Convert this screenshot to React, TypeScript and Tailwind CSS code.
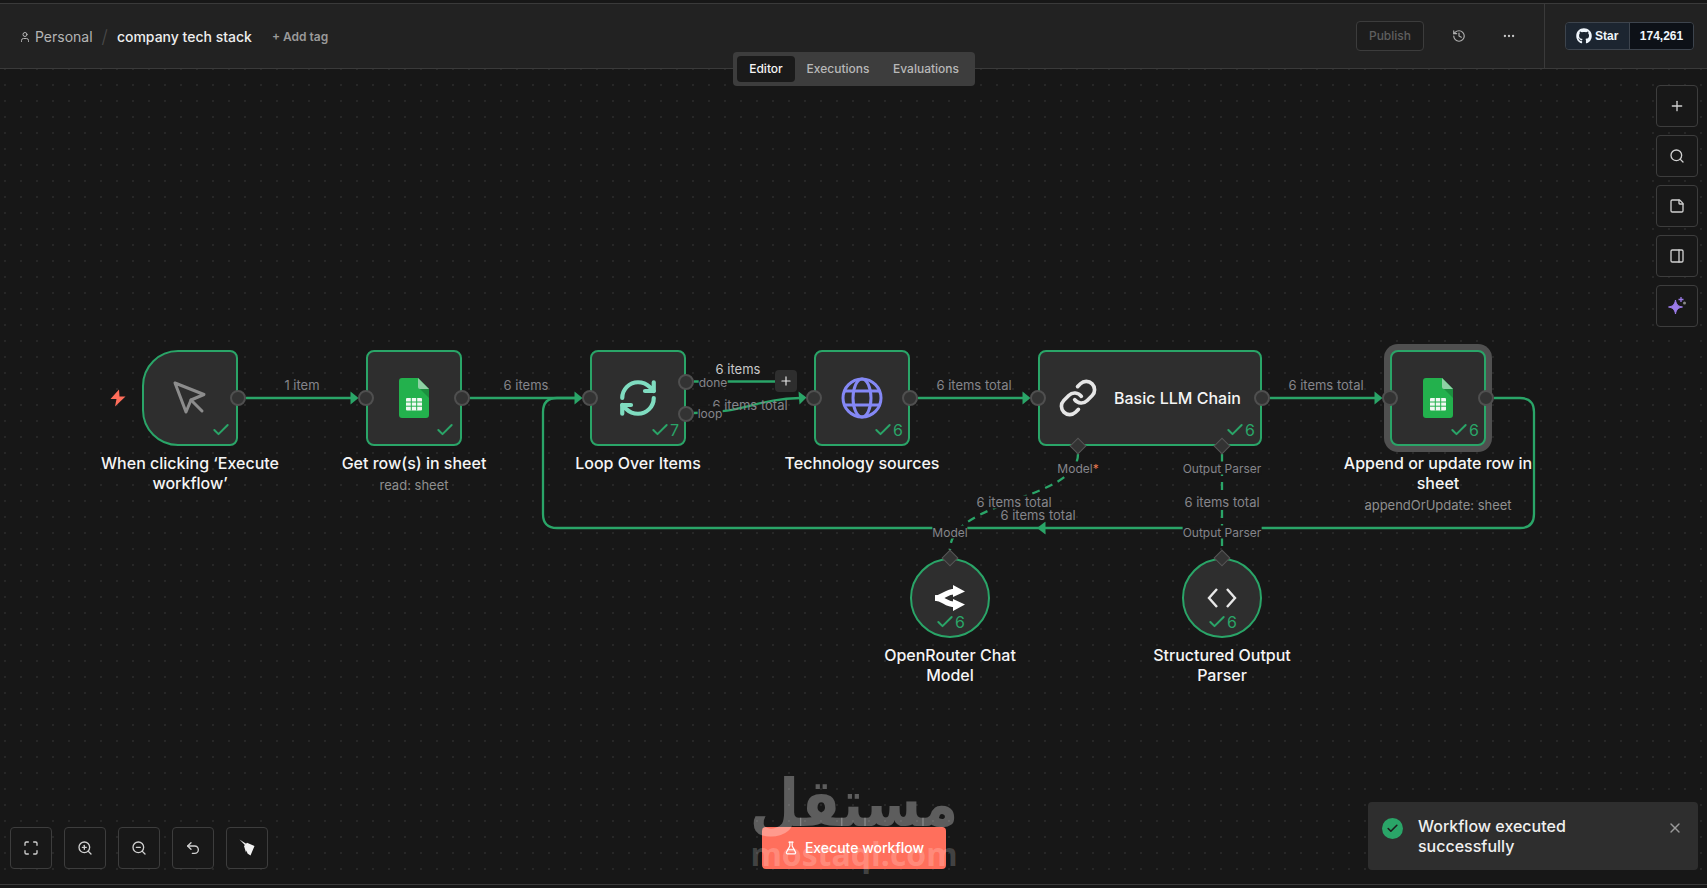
import type { ReactNode } from "react";
import {
  Check,
  Ellipsis,
  FlaskConical,
  History,
  Link,
  Maximize,
  PanelRight,
  Plus,
  RefreshCw,
  Search,
  StickyNote,
  Undo2,
  User,
  X,
  ZoomIn,
  ZoomOut,
} from "lucide-react";
import { FaGithub } from "react-icons/fa";

const GREEN = "#2aa568";

function Status({ count, center }: { count?: number; center?: boolean }) {
  return (
    <div
      className={
        center
          ? "absolute bottom-[4px] left-0 right-0 flex h-5 items-center justify-center text-base leading-none text-[#2aa568]"
          : "absolute bottom-[4px] right-[5px] flex h-5 items-center text-base leading-none text-[#2aa568]"
      }
    >
      <Check size={20} strokeWidth={2.4} />
      {count !== undefined && <span>{count}</span>}
    </div>
  );
}

function Port({ className }: { className: string }) {
  return (
    <div
      className={`absolute h-4 w-4 -translate-x-1/2 -translate-y-1/2 rounded-full border-2 border-[#4f4f4f] bg-[#333333] ${className}`}
    />
  );
}

function Diamond({ className }: { className: string }) {
  return (
    <div
      className={`absolute h-3 w-3 -translate-x-1/2 -translate-y-1/2 rotate-45 border border-[#555555] bg-[#333333] ${className}`}
    />
  );
}

function Caption({
  title,
  sub,
  narrow,
  className,
}: {
  title: string;
  sub?: string;
  narrow?: boolean;
  className: string;
}) {
  return (
    <div
      className={`absolute -translate-x-1/2 text-center ${narrow ? "w-[160px]" : "w-[192px]"} ${className}`}
    >
      <div className="text-base font-medium leading-5 text-[#f5f5f5]">{title}</div>
      {sub && <div className="mt-1 text-[13px] leading-4 text-[#8f8f8f]">{sub}</div>}
    </div>
  );
}

function EdgeLabel({
  children,
  className,
}: {
  children: ReactNode;
  className: string;
}) {
  return (
    <div
      className={`absolute -translate-x-1/2 -translate-y-1/2 whitespace-nowrap leading-[13px] ${className}`}
    >
      {children}
    </div>
  );
}

function SheetIcon() {
  return (
    <svg width="30" height="40" viewBox="0 0 30 40">
      <path d="M3 0H19L30 11V37a3 3 0 0 1-3 3H3a3 3 0 0 1-3-3V3a3 3 0 0 1 3-3Z" fill="#23b14d" />
      <path d="M19 0L30 11H21a2 2 0 0 1-2-2Z" fill="#8ed1a4" />
      <path d="M21 11L30 20V11Z" fill="#1c8f3f" />
      <rect x="7" y="20" width="16" height="12.5" rx="1" fill="#f1f8f3" />
      <path d="M7 24H23M7 28.200H23M12.300 20V32.500M17.700 20V32.500" stroke="#23b14d" strokeWidth="1" />
    </svg>
  );
}

function GlobeIcon() {
  return (
    <svg width="42" height="42" viewBox="0 0 42 42" fill="none" stroke="#8488f5" strokeWidth="3">
      <circle cx="21" cy="21" r="19" />
      <ellipse cx="21" cy="21" rx="9" ry="19" />
      <path d="M3.500 14H38.500M3.500 28H38.500" />
    </svg>
  );
}

function CursorIcon() {
  return (
    <svg width="36" height="36" viewBox="0 0 36 36" fill="none" stroke="#8c8c8c" strokeWidth="3" strokeLinejoin="round" strokeLinecap="round">
      <path d="M3 3L32 14.500L19 20L14 32Z" />
      <path d="M19 20L30 31" />
    </svg>
  );
}

function OpenRouterIcon() {
  return (
    <svg width="32" height="26" viewBox="0 0 32 26" fill="none">
      <path d="M1 13C10 13 11 6.500 21 6.500" stroke="#fff" strokeWidth="5.500" />
      <path d="M1 13C10 13 11 19.500 21 19.500" stroke="#fff" strokeWidth="5.500" />
      <path d="M19 0L31 6.500L19 12Z M19 14L31 19.500L19 26Z" fill="#fff" />
    </svg>
  );
}

function CodeIcon() {
  return (
    <svg width="30" height="24" viewBox="0 0 30 24" fill="none" stroke="#e8e8e8" strokeWidth="2.400">
      <path d="M10 3L2 12L10 21M20 3L28 12L20 21" />
    </svg>
  );
}

function SparkIcon() {
  return (
    <svg width="20" height="20" viewBox="0 0 20 20">
      <path d="M8.500 4C9.300 8.500 11 10.300 15.500 11C11 11.900 9.300 13.500 8.500 18C7.700 13.500 6 11.900 1.500 11C6 10.300 7.700 8.500 8.500 4Z" fill="#9b7be8" stroke="#9b7be8" strokeLinejoin="round" />
      <path d="M14 1V6M11.500 3.500H16.500" stroke="#9b7be8" strokeWidth="1.300" />
      <circle cx="17.500" cy="7" r="1.500" fill="#8a8a8a" />
    </svg>
  );
}

function BroomIcon() {
  return (
    <svg width="18" height="18" viewBox="0 0 18 18" fill="#f2f2f2">
      <path d="M1.500 0.500L8.500 5L7.300 6.500Z" />
      <path d="M6 7L9 3.800L16.500 7L12.500 16.500L9.500 14.500L8.500 11.500L8 13.500Z" />
    </svg>
  );
}

function ToolButton({ children }: { children: ReactNode }) {
  return (
    <button
      type="button"
      className="flex h-[42px] w-[42px] items-center justify-center rounded border border-[#3d3d3d] bg-[#181818] text-[#d0d0d0]"
    >
      {children}
    </button>
  );
}

function Arrow({ points }: { points: string }) {
  return <polygon points={points} fill={GREEN} />;
}

function Edges() {
  return (
    <svg className="absolute left-0 top-0" width="1707" height="888" fill="none" stroke={GREEN} strokeWidth="2.300">
      <path d="M246 398H352" />
      <path d="M470 398H576" />
      <path d="M1494 398H1520Q1534 398 1534 412V514Q1534 528 1520 528H557Q543 528 543 514V412Q543 398 557 398H576" />
      <path d="M694 381.500H776" />
      <path d="M694 413C744 413 756 399 800 398" />
      <path d="M918 398H1024" />
      <path d="M1270 398H1376" />
      <path d="M1078 454C1078 500 950 500 950 550" strokeDasharray="8 6" />
      <path d="M1222 454V550" strokeDasharray="8 6" />
      <g stroke="none">
        <Arrow points="350.500,391.500 358.500,398 350.500,404.500" />
        <Arrow points="574.500,391.500 582.500,398 574.500,404.500" />
        <Arrow points="798.500,391.500 806.500,397.500 799.500,404.500" />
        <Arrow points="1022.500,391.500 1030.500,398 1022.500,404.500" />
        <Arrow points="1374.500,391.500 1382.500,398 1374.500,404.500" />
        <Arrow points="1045.500,521.500 1037,528 1045.500,534.500" />
      </g>
    </svg>
  );
}

function Diagram() {
  const nodeBase =
    "absolute flex h-24 items-center justify-center border-2 border-[#2aa568] bg-[#2e2e2e]";
  const muted = "text-[13px] text-[#85858b]";
  const cut = "bg-[#171717] text-xs text-[#85858b]";
  const cutBig = "bg-[#171717] text-[13px] text-[#85858b]";

  return (
    <div className="absolute left-0 top-[-69px] h-[888px] w-[1707px]">
      <Edges />

      {/* labels on the edges */}
      <EdgeLabel className={`left-[302px] top-[385px] ${muted}`}>1 item</EdgeLabel>
      <EdgeLabel className={`left-[526px] top-[385px] ${muted}`}>6 items</EdgeLabel>
      <EdgeLabel className="left-[738px] top-[369px] text-[13px] text-[#c9c9c9]">6 items</EdgeLabel>
      <EdgeLabel className={`left-[750px] top-[405px] ${muted}`}>6 items total</EdgeLabel>
      <EdgeLabel className={`left-[974px] top-[385px] ${muted}`}>6 items total</EdgeLabel>
      <EdgeLabel className={`left-[1326px] top-[385px] ${muted}`}>6 items total</EdgeLabel>
      <EdgeLabel className={`left-[713px] top-[382px] ${cut}`}>done</EdgeLabel>
      <EdgeLabel className={`left-[710px] top-[413px] ${cut}`}>loop</EdgeLabel>
      <EdgeLabel className={`left-[1078px] top-[468px] ${cut}`}>
        Model<span className="text-[#e8784f]">*</span>
      </EdgeLabel>
      <EdgeLabel className={`left-[1222px] top-[468px] ${cut}`}>Output Parser</EdgeLabel>
      <EdgeLabel className={`left-[1014px] top-[502px] ${cutBig}`}>6 items total</EdgeLabel>
      <EdgeLabel className={`left-[1038px] top-[515px] ${cutBig}`}>6 items total</EdgeLabel>
      <EdgeLabel className={`left-[1222px] top-[502px] ${cutBig}`}>6 items total</EdgeLabel>
      <EdgeLabel className={`left-[950px] top-[532px] ${cut}`}>Model</EdgeLabel>
      <EdgeLabel className={`left-[1222px] top-[532px] ${cut}`}>Output Parser</EdgeLabel>

      <button
        type="button"
        className="absolute left-[775px] top-[370px] flex h-[22px] w-[22px] items-center justify-center rounded bg-[#2e2e2e] text-[#e8e8e8]"
      >
        <Plus size={14} />
      </button>

      {/* trigger */}
      <svg className="absolute left-[109px] top-[389px]" width="18" height="18" viewBox="0 0 18 18">
        <path d="M10 0.500L1.500 10H7.500L6 17.500L16.500 7.500H10.500Z" fill="#ff6d5a" />
      </svg>
      <div className={`${nodeBase} left-[142px] top-[350px] w-24 rounded-l-[36px] rounded-r-lg`}>
        <CursorIcon />
        <Status />
      </div>
      <Caption title="When clicking ‘Execute workflow’" className="left-[190px] top-[453px]" />

      {/* get rows */}
      <div className={`${nodeBase} left-[366px] top-[350px] w-24 rounded-lg`}>
        <SheetIcon />
        <Status />
      </div>
      <Caption title="Get row(s) in sheet" sub="read: sheet" className="left-[414px] top-[453px]" />

      {/* loop */}
      <div className={`${nodeBase} left-[590px] top-[350px] w-24 rounded-lg`}>
        <RefreshCw size={42} color="#7fdcc0" strokeWidth={2.4} />
        <Status count={7} />
      </div>
      <Caption title="Loop Over Items" className="left-[638px] top-[453px]" />

      {/* http request */}
      <div className={`${nodeBase} left-[814px] top-[350px] w-24 rounded-lg`}>
        <GlobeIcon />
        <Status count={6} />
      </div>
      <Caption title="Technology sources" className="left-[862px] top-[453px]" />

      {/* llm chain */}
      <div className={`${nodeBase} left-[1038px] top-[350px] w-[224px] justify-start rounded-lg pl-[18px]`}>
        <Link size={40} color="#e6e6e6" strokeWidth={2.2} />
        <span className="ml-[16px] text-base font-medium text-[#f5f5f5]">Basic LLM Chain</span>
        <Status count={6} />
      </div>

      {/* append */}
      <div className={`${nodeBase} left-[1390px] top-[350px] w-24 rounded-lg ring-[6px] ring-[#505050]`}>
        <SheetIcon />
        <Status count={6} />
      </div>
      <Caption
        title="Append or update row in sheet"
        sub="appendOrUpdate: sheet"
        className="left-[1438px] top-[453px]"
      />

      {/* sub nodes */}
      <div className={`${nodeBase} left-[910px] top-[558px] !h-20 w-20 rounded-full`}>
        <OpenRouterIcon />
        <Status count={6} center />
      </div>
      <Caption narrow title="OpenRouter Chat Model" className="left-[950px] top-[645px]" />

      <div className={`${nodeBase} left-[1182px] top-[558px] !h-20 w-20 rounded-full`}>
        <CodeIcon />
        <Status count={6} center />
      </div>
      <Caption narrow title="Structured Output Parser" className="left-[1222px] top-[645px]" />

      {/* connection handles */}
      <Port className="left-[238px] top-[398px]" />
      <Port className="left-[366px] top-[398px]" />
      <Port className="left-[462px] top-[398px]" />
      <Port className="left-[590px] top-[398px]" />
      <Port className="left-[686px] top-[382px]" />
      <Port className="left-[686px] top-[414px]" />
      <Port className="left-[814px] top-[398px]" />
      <Port className="left-[910px] top-[398px]" />
      <Port className="left-[1038px] top-[398px]" />
      <Port className="left-[1262px] top-[398px]" />
      <Port className="left-[1390px] top-[398px]" />
      <Port className="left-[1486px] top-[398px]" />
      <Diamond className="left-[1078px] top-[446px]" />
      <Diamond className="left-[1222px] top-[446px]" />
      <Diamond className="left-[950px] top-[558px]" />
      <Diamond className="left-[1222px] top-[558px]" />
    </div>
  );
}

export default function App() {
  return (
    <div className="relative flex h-screen w-full flex-col overflow-hidden bg-[#171717] pt-[3px] font-[Inter,sans-serif]">
      <header className="flex h-[66px] shrink-0 items-center border-y border-[#3a3a3a] bg-[#222222] pl-[19px]">
        <div className="flex items-center pt-[1px]">
          <User size={12} className="text-[#b5b5b5]" />
          <span className="ml-[4px] text-sm text-[#b5b5b5]">Personal</span>
          <span className="ml-[9px] text-lg font-light text-[#4a4a4a]">/</span>
          <span className="ml-[9px] text-sm font-medium text-[#eeeeee]">company tech stack</span>
          <span className="ml-[20px] text-xs font-semibold text-[#9a9a9a]">+ Add tag</span>
        </div>

        <div className="ml-auto flex h-full items-center">
          <button
            type="button"
            className="h-[30px] w-[68px] rounded border border-[#3c3c3c] bg-[#1d1d1d] text-xs font-medium text-[#5f5f5f]"
          >
            Publish
          </button>
          <History size={14} className="ml-[28px] text-[#b0b0b0]" />
          <Ellipsis size={14} className="ml-[36px] text-[#c8c8c8]" />
          <div className="ml-[28px] h-full w-px bg-[#3a3a3a]" />
          <div className="ml-[20px] mr-[13px] flex h-[28px] w-[129px] overflow-hidden rounded border border-[#3d444d] font-['Liberation_Sans',sans-serif] text-xs font-bold text-[#f0f6fc]">
            <div className="flex w-[64px] items-center gap-[3px] border-r border-[#3d444d] bg-[#1c2530] pl-[10px]">
              <FaGithub size={16} />
              <span>Star</span>
            </div>
            <div className="flex flex-1 items-center justify-center bg-[#0d1117]">174,261</div>
          </div>
        </div>
      </header>

      <main className="relative flex-1 bg-[#171717] bg-[radial-gradient(#3a3a3a_0.6px,transparent_0.8px)] bg-[size:16px_16px] bg-[position:-3px_-8px]">
        <Diagram />

        {/* right tools */}
        <div className="absolute right-[9px] top-[16px] flex flex-col gap-2">
          <ToolButton>
            <Plus size={16} />
          </ToolButton>
          <ToolButton>
            <Search size={16} />
          </ToolButton>
          <ToolButton>
            <StickyNote size={16} />
          </ToolButton>
          <ToolButton>
            <PanelRight size={16} />
          </ToolButton>
          <ToolButton>
            <SparkIcon />
          </ToolButton>
        </div>

        {/* canvas controls */}
        <div className="absolute bottom-[15px] left-[10px] flex gap-3">
          <ToolButton>
            <Maximize size={16} />
          </ToolButton>
          <ToolButton>
            <ZoomIn size={16} />
          </ToolButton>
          <ToolButton>
            <ZoomOut size={16} />
          </ToolButton>
          <ToolButton>
            <Undo2 size={16} />
          </ToolButton>
          <ToolButton>
            <BroomIcon />
          </ToolButton>
        </div>

        {/* execute */}
        <button
          type="button"
          className="absolute bottom-[15px] left-[762px] flex h-[42px] w-[184px] items-center justify-center gap-[7px] rounded bg-[#ff6f5c] text-sm font-medium text-white"
        >
          <FlaskConical size={14} />
          Execute workflow
        </button>

        {/* toast */}
        <div className="absolute bottom-[14px] right-[9px] flex h-[68px] w-[330px] rounded bg-[#2e2e2e] pl-[14px] pt-[14px]">
          <div className="mt-[2px] flex h-[21px] w-[21px] items-center justify-center rounded-full bg-[#2aa568] text-[#1d1d1d]">
            <Check size={13} strokeWidth={3} />
          </div>
          <div className="ml-[15px] w-[200px] text-base font-medium leading-5 text-[#f0f0f0]">
            Workflow executed successfully
          </div>
          <X size={16} className="ml-[49px] mt-[4px] text-[#9a9a9a]" />
        </div>

        {/* watermark */}
        <div className="pointer-events-none absolute left-[752px] top-[702px] flex w-[204px] flex-col items-center">
          <div className="h-[64px] origin-center scale-y-[1.15] font-['DejaVu_Sans',sans-serif] text-[57px] font-bold leading-[64px] text-white/30">
            مستقل
          </div>
          <div className="mt-[-1px] font-['Open_Sans',sans-serif] text-[32px] font-bold leading-[40px] text-white/20">
            mostaql.com
          </div>
        </div>
      </main>

      <footer className="h-[4px] shrink-0 border-t border-[#3a3a3a] bg-[#171717]" />

      {/* tabs sit over the header edge */}
      <div className="absolute left-[733px] top-[52px] flex h-[34px] w-[242px] items-center rounded bg-[#3d3d3d] p-1 text-xs font-medium text-[#b8b8b8]">
        <div className="flex h-[26px] w-[58px] items-center justify-center rounded bg-[#1a1a1a] text-[#f5f5f5]">
          Editor
        </div>
        <div className="flex h-[26px] w-[86px] items-center justify-center">Executions</div>
        <div className="flex h-[26px] w-[90px] items-center justify-center">Evaluations</div>
      </div>
    </div>
  );
}
